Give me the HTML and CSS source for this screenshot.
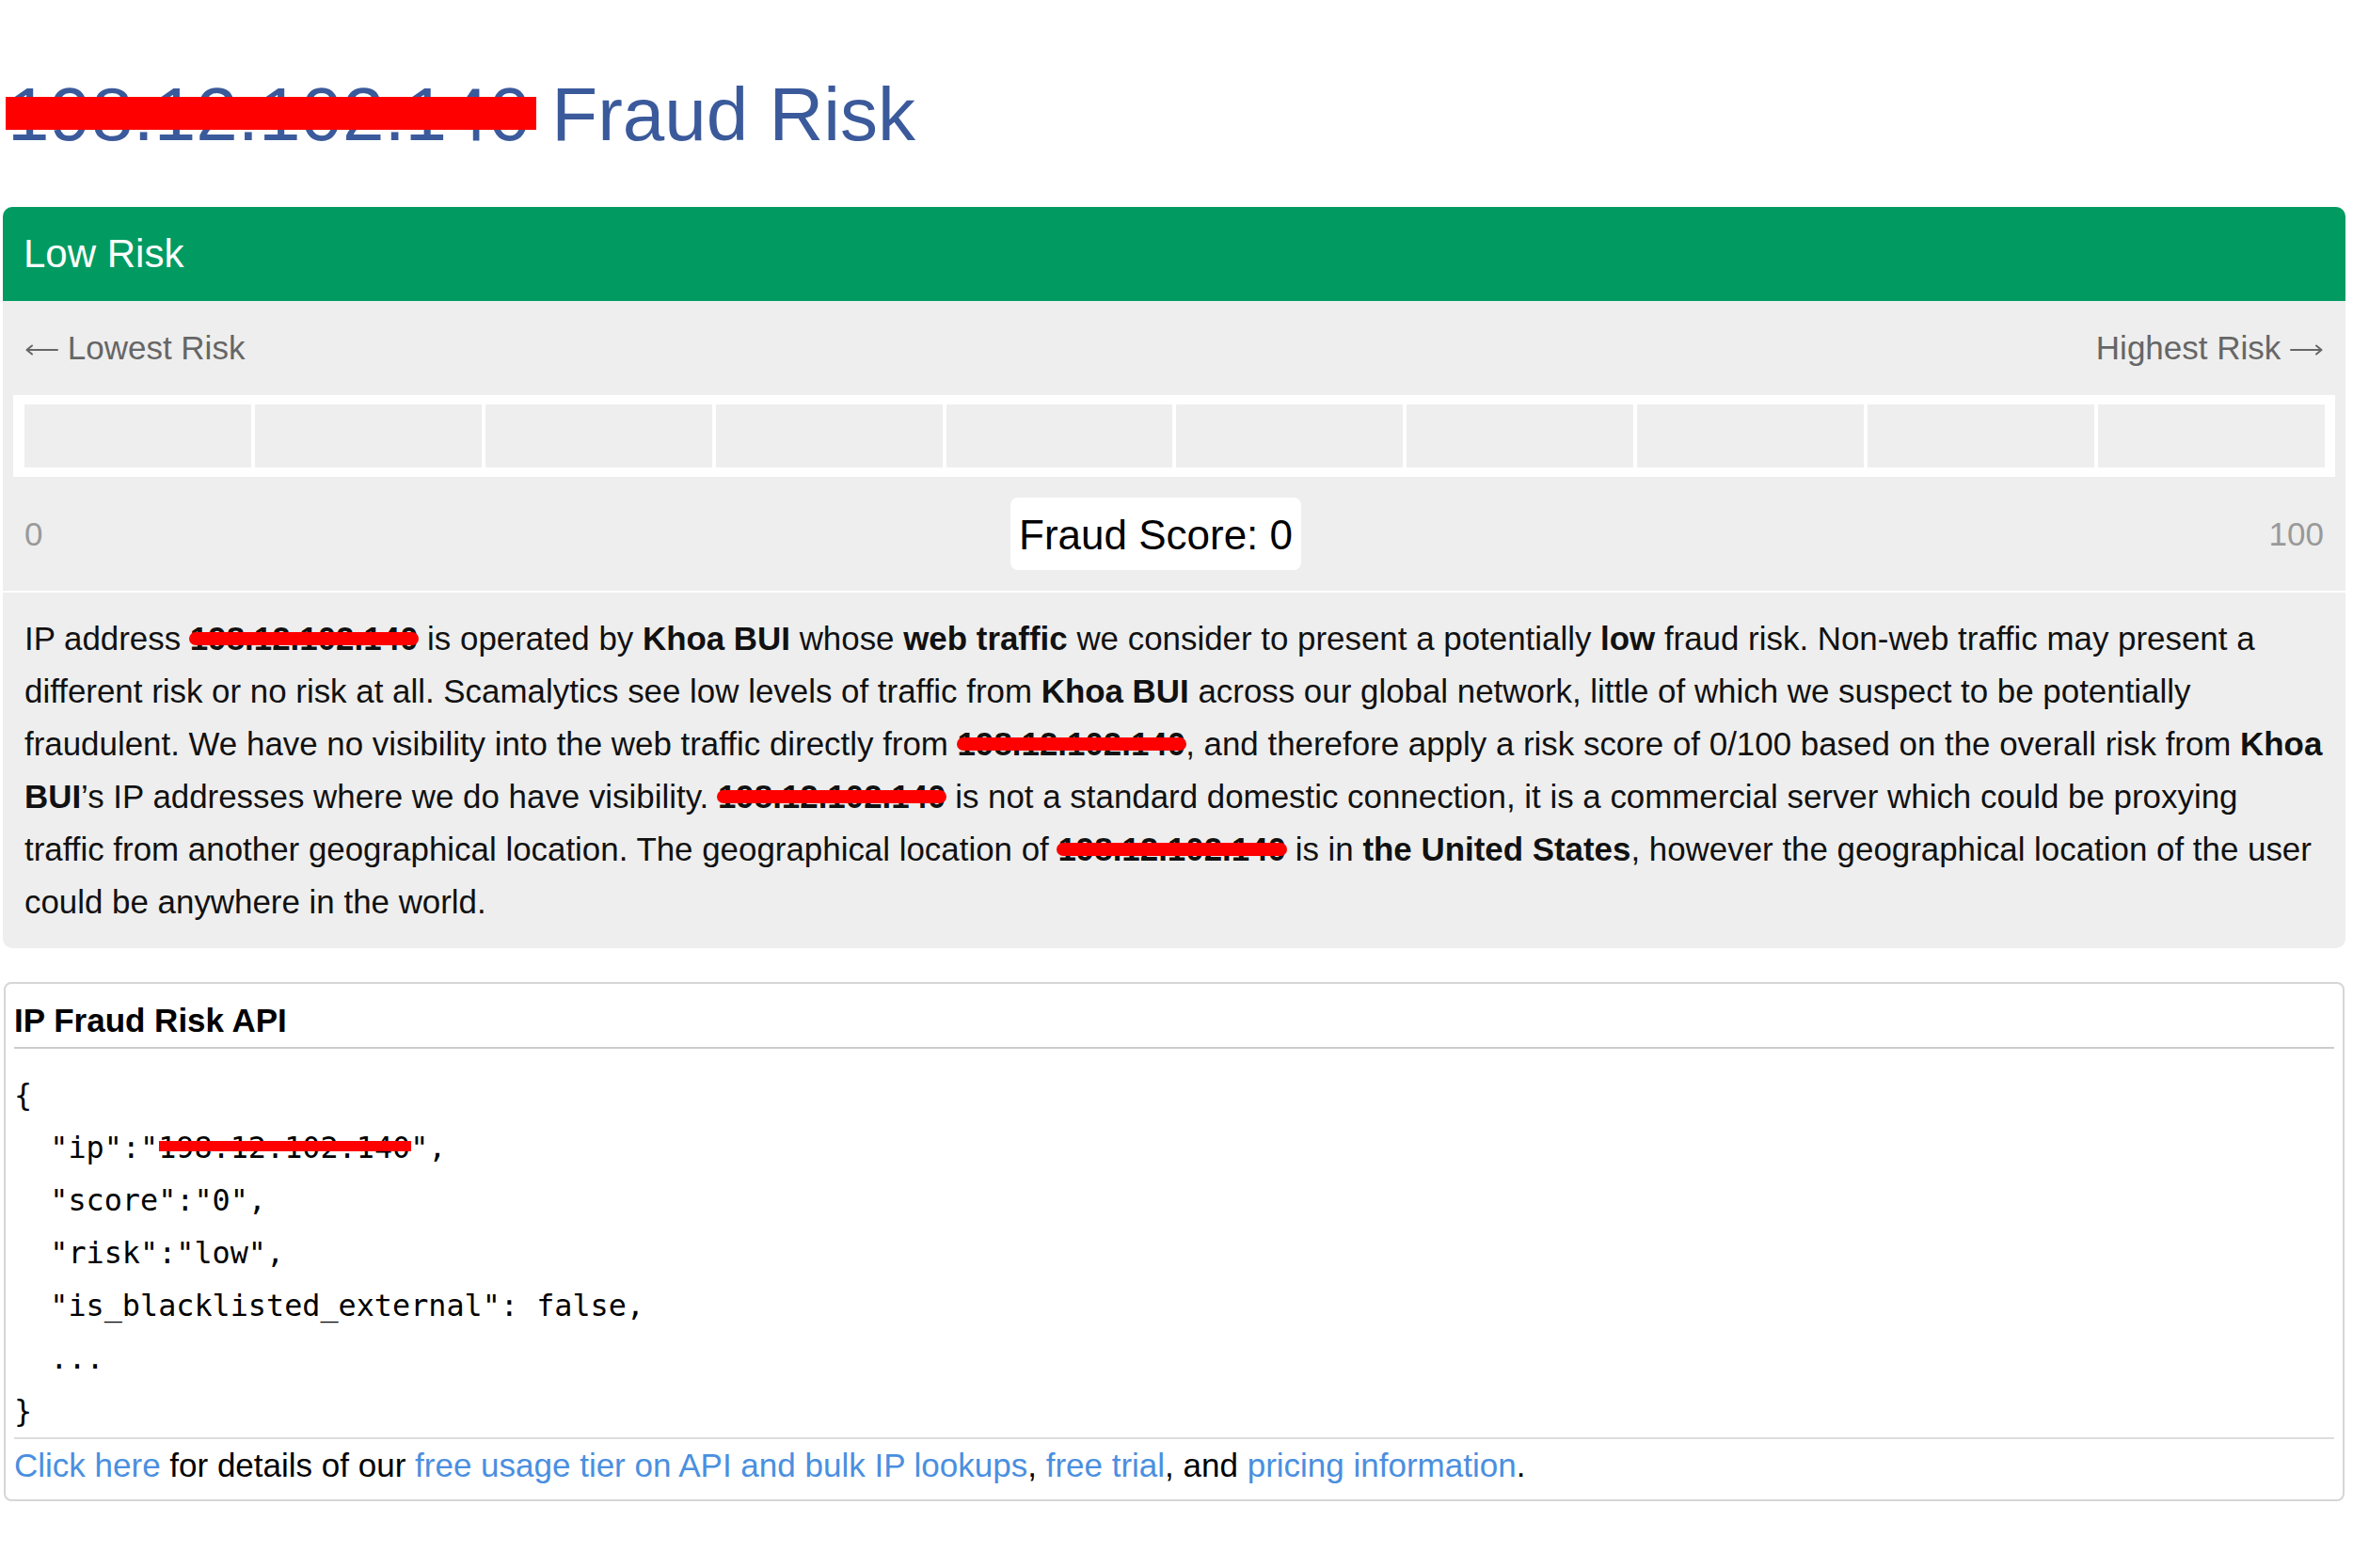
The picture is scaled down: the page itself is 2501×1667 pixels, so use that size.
FILE: index.html
```
<!DOCTYPE html>
<html lang="en">
<head>
<meta charset="utf-8">
<title>Fraud Risk</title>
<link rel="stylesheet" href="styles.css">
</head>
<body>
<div class="page">
  <h1 class="title"><span class="redact">198.12.102.140</span> Fraud Risk</h1>

  <section class="risk-panel">
    <div class="risk-head">Low Risk</div>
    <div class="risk-scale">
      <div class="scale-labels">
        <span><svg class="arrow" width="36" height="12" viewBox="0 0 36 12" aria-hidden="true"><path d="M35 6H2.5M8 1.5L2.5 6L8 10.5"/></svg> Lowest Risk</span>
        <span>Highest Risk <svg class="arrow" width="36" height="12" viewBox="0 0 36 12" aria-hidden="true"><path d="M1 6H33.5M28 1.5L33.5 6L28 10.5"/></svg></span>
      </div>
      <div class="scale-bar">
        <div class="cell"></div><div class="cell"></div><div class="cell"></div><div class="cell"></div><div class="cell"></div>
        <div class="cell"></div><div class="cell"></div><div class="cell"></div><div class="cell"></div><div class="cell"></div>
      </div>
      <div class="score-row">
        <span class="score-end">0</span>
        <span class="score-box">Fraud Score: 0</span>
        <span class="score-end">100</span>
      </div>
    </div>
    <p class="risk-text">IP address <b class="redact">198.12.102.140</b> is operated by <b>Khoa BUI</b> whose <b>web traffic</b> we consider to present a potentially <b>low</b> fraud risk. Non-web traffic may present a different risk or no risk at all. Scamalytics see low levels of traffic from <b>Khoa BUI</b> across our global network, little of which we suspect to be potentially fraudulent. We have no visibility into the web traffic directly from <b class="redact">198.12.102.140</b>, and therefore apply a risk score of 0/100 based on the overall risk from <b>Khoa BUI</b>’s IP addresses where we do have visibility. <b class="redact">198.12.102.140</b> is not a standard domestic connection, it is a commercial server which could be proxying <span class="nowrap">traffic from</span> another geographical location. The geographical location of <b class="redact">198.12.102.140</b> is in <b>the United States</b>, however the geographical location of the user could be anywhere in the world.</p>
  </section>

  <section class="api-box">
    <h2 class="api-title">IP Fraud Risk API</h2>
<pre class="api-code">{
  "ip":"<span class="redact">198.12.102.140</span>",
  "score":"0",
  "risk":"low",
  "is_blacklisted_external": false,
  ...
}</pre>
    <p class="api-foot"><a href="#">Click here</a> for details of our <a href="#">free usage tier on API and bulk IP lookups</a>, <a href="#">free trial</a>, and <a href="#">pricing information</a>.</p>
  </section>
</div>
</body>
</html>
```
FILE: styles.css
```
html, body {
  margin: 0;
  padding: 0;
  background: #fff;
}

body {
  font-family: "Liberation Sans", Arial, sans-serif;
  color: #111;
}

.page {
  width: 2490px;
  margin: 0 0 0 3px;
}

.redact {
  position: relative;
}

.redact::after {
  content: "";
  position: absolute;
  background: #ff0000;
}

.nowrap {
  white-space: nowrap;
}

.title {
  margin: 76px 0 52px;
  padding-left: 5px;
  font-size: 80px;
  font-weight: 400;
  line-height: normal;
  color: #3b5a9b;
}

.title .redact::after {
  left: -2px;
  right: -6px;
  top: 26px;
  height: 35px;
}

.risk-panel {
  background: #eeeeee;
  border-radius: 10px;
  overflow: hidden;
}

.risk-head {
  height: 100px;
  display: flex;
  align-items: center;
  padding: 0 22px;
  background: #019b62;
  color: #fff;
  font-size: 42px;
}

.risk-scale {
  display: flex;
  flex-direction: column;
  gap: 22px;
  padding: 22px 11px;
  border-bottom: 2px solid #fff;
}

.scale-labels {
  display: flex;
  justify-content: space-between;
  padding: 0 12px;
  font-size: 35px;
  line-height: 56px;
  color: #666;
}

.arrow {
  vertical-align: 4px;
  fill: none;
  stroke: #666;
  stroke-width: 2;
  stroke-linecap: round;
  stroke-linejoin: round;
}

.scale-bar {
  display: grid;
  grid-template-columns: repeat(10, 1fr);
  gap: 4px;
  padding: 10px 11px 10px 12px;
  background: #fff;
}

.cell {
  height: 67px;
  background: #eeeeee;
}

.score-row {
  display: flex;
  justify-content: space-between;
  align-items: center;
  padding: 0 12px;
}

.score-end {
  font-size: 35px;
  color: #999;
}

.score-box {
  background: #fff;
  border-radius: 8px;
  padding: 15px 9px 12px;
  font-size: 44px;
  line-height: normal;
  color: #000;
}

.risk-text {
  margin: 0;
  padding: 21px 18px 21px 23px;
  font-size: 34.9px;
  line-height: 56px;
  color: #111;
}

.risk-text .redact::after {
  left: -1px;
  right: -1px;
  top: 13px;
  height: 14px;
  border-radius: 7px;
}

.api-box {
  margin: 36px 1px 0;
  border: 2px solid #d6d6d6;
  border-radius: 8px;
  padding: 11px 9px 8px;
}

.api-title {
  margin: 0;
  font-size: 35px;
  font-weight: 700;
  line-height: 56px;
  color: #000;
  border-bottom: 2px solid #cccccc;
}

.api-code {
  margin: 21px 0 0;
  font-family: "DejaVu Sans Mono", "Liberation Mono", monospace;
  font-size: 31.8px;
  line-height: 56px;
  color: #000;
}

.api-code .redact::after {
  left: 1px;
  right: -1px;
  top: 12px;
  height: 11px;
}

.api-foot {
  margin: 0;
  border-top: 2px solid #dddddd;
  font-size: 35px;
  line-height: 56px;
  color: #000;
}

.api-foot a {
  color: #4a8fdf;
  text-decoration: none;
}
```
